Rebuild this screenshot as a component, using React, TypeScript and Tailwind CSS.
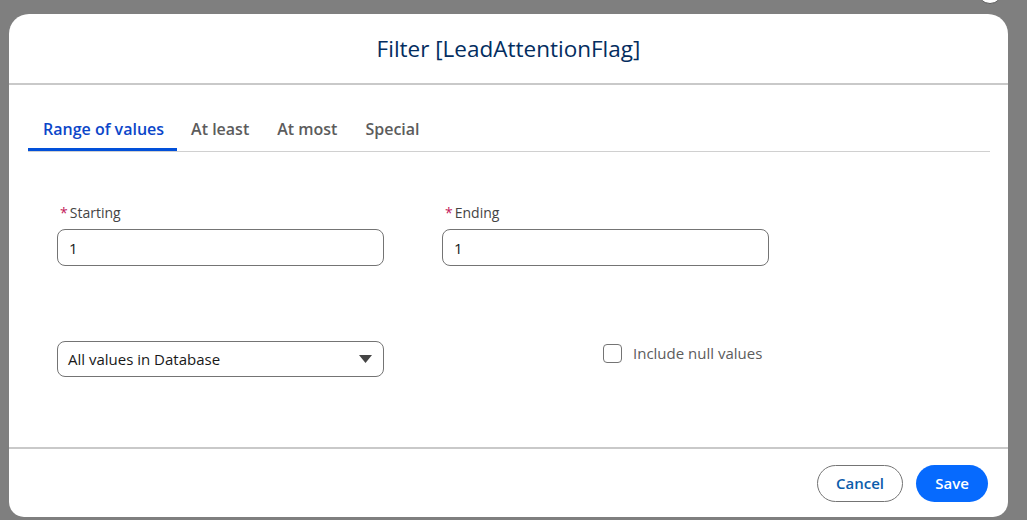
import { useState } from "react";

const font = { fontFamily: '"Open Sans", "Noto Sans", sans-serif' };

type TabProps = {
  label: string;
  active?: boolean;
};

function Tab({ label, active = false }: TabProps) {
  return (
    <button
      className={
        active
          ? "border-b-[3px] border-[#0250d9] pl-[15px] pr-[13px] pb-[7px] pt-[7px] text-[16px] leading-6 font-semibold text-[#0b46c9]"
          : "border-b-[3px] border-transparent px-[14px] pb-[7px] pt-[7px] text-[16px] leading-6 font-semibold text-[#5c5c5c]"
      }
    >
      {label}
    </button>
  );
}

type FieldProps = {
  label: string;
  value: string;
};

function Field({ label, value }: FieldProps) {
  return (
    <div className="flex w-[327px] flex-col">
      <label className="flex items-center pl-[3px] text-[14px] leading-5 text-[#444444]">
        <span className="mr-[2px] text-[#c2185b]">*</span>
        {label}
      </label>
      <input
        defaultValue={value}
        className="mt-[6px] h-[37px] rounded-[8px] border border-[#747474] bg-white px-[11px] text-[15px] text-[#181818] outline-none"
      />
    </div>
  );
}

export default function App() {
  const [includeNull, setIncludeNull] = useState(false);

  return (
    <div className="relative h-[520px] w-[1027px] overflow-hidden bg-[#7f7f7f] pl-[9px] pt-[14px]" style={font}>
      <div className="absolute -top-[22px] left-[977px] h-[26px] w-[26px] rounded-full border border-[#5c5c5c] bg-white" />
      <div className="flex h-[503px] w-[999px] flex-col rounded-t-[20px] rounded-b-[15px] bg-white">
        <div className="flex h-[71px] items-center justify-center border-b-2 border-[#c9c9c9]">
          <h1 className="mt-[1px] text-[22.5px] text-[#032d60]">Filter [LeadAttentionFlag]</h1>
        </div>

        <div className="flex flex-1 flex-col">
          <div className="ml-[19px] mr-[18px] mt-[25px] flex border-b border-[#d0d0d0]">
            <Tab label="Range of values" active />
            <Tab label="At least" />
            <Tab label="At most" />
            <Tab label="Special" />
          </div>

          <div className="flex gap-[58px] pl-[48px] pt-[51px]">
            <Field label="Starting" value="1" />
            <Field label="Ending" value="1" />
          </div>

          <div className="flex items-center pl-[48px] pt-[75px]">
            <div className="flex h-[36px] w-[327px] items-center justify-between rounded-[8px] border border-[#747474] px-[10px]">
              <span className="text-[15px] text-[#181818]">All values in Database</span>
              <svg width="13" height="8" viewBox="0 0 13 8" className="mr-[1px]">
                <path d="M0 0 L13 0 L6.5 8 Z" fill="#444444" />
              </svg>
            </div>
            <label className="-mt-[12px] ml-[219px] flex cursor-pointer items-center">
              <input
                type="checkbox"
                checked={includeNull}
                onChange={(e) => setIncludeNull(e.target.checked)}
                className="h-[19px] w-[19px] appearance-none rounded-[4px] border border-[#747474] bg-white"
              />
              <span className="ml-[11px] text-[15px] text-[#5c5c5c]">Include null values</span>
            </label>
          </div>
        </div>

        <div className="flex h-[70px] items-center justify-end gap-[13px] border-t-2 border-[#c9c9c9] pr-[20px]">
          <button className="h-[37px] w-[86px] rounded-full border border-[#747474] bg-white text-[15px] font-semibold text-[#0b5cab]">
            Cancel
          </button>
          <button className="h-[37px] w-[72px] rounded-full bg-[#066afe] text-[15px] font-semibold text-white">
            Save
          </button>
        </div>
      </div>
    </div>
  );
}
